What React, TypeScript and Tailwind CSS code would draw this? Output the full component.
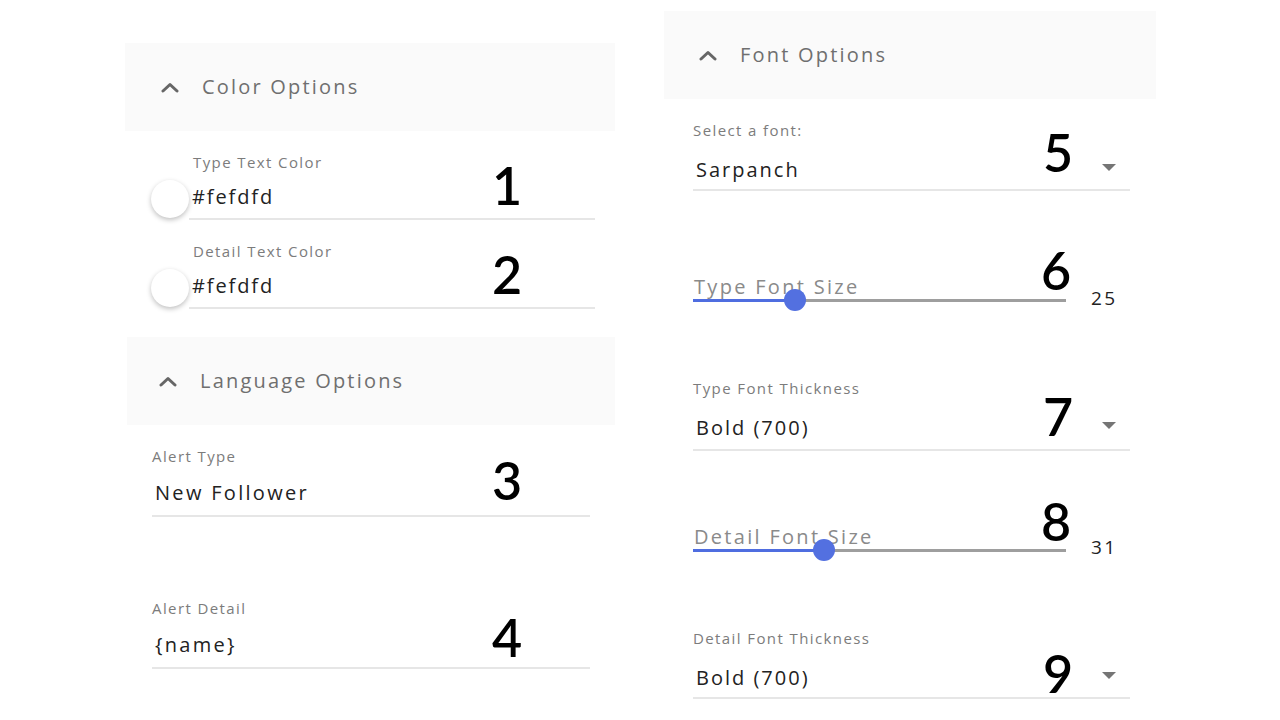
import React from "react";

const Chevron = () => (
  <svg width="18" height="11" viewBox="0 0 18 11" fill="none">
    <polyline points="2,9 9,2.5 16,9" stroke="#666" strokeWidth="3" strokeLinecap="round" strokeLinejoin="round" />
  </svg>
);

const Caret = () => (
  <svg width="14" height="7" viewBox="0 0 14 7">
    <polygon points="0,0 14,0 7,7" fill="#757575" />
  </svg>
);

const Num = ({ n, className }: { n: string; className: string }) => (
  <span
    className={`absolute w-[40px] text-center text-[52px] leading-[52px] font-semibold text-black font-['Lato',sans-serif] tracking-normal ${className}`}
  >
    {n}
  </span>
);

const Header = ({ title, className }: { title: string; className: string }) => (
  <div className={`h-[88px] bg-[#fafafa] flex items-center gap-[23px] ${className}`}>
    <Chevron />
    <span className="text-[20px] text-[#6f6f6f] tracking-[2.2px]">{title}</span>
  </div>
);

const ColorField = ({ label, value, n, className }: { label: string; value: string; n: string; className: string }) => (
  <div className={`flex items-end ${className}`}>
    <div className="ml-[26px] mb-[2px] w-[38px] h-[38px] rounded-full bg-white shadow-[0_2px_5px_rgba(0,0,0,0.25)] shrink-0" />
    <div className="relative w-[406px] border-b-2 border-[#e6e6e6] pb-[7px]">
      <div className="pl-[4px] text-[15px] leading-[20px] text-[#7c7c7c] tracking-[1.4px]">{label}</div>
      <div className="pl-[3px] mt-[11px] text-[20px] leading-[28px] text-[#222] tracking-[1.9px]">{value}</div>
      <Num n={n} className="left-[298px] top-[7px]" />
    </div>
  </div>
);

const TextField = ({ label, value, n, className, numTop }: { label: string; value: string; n: string; className: string; numTop: string }) => (
  <div className={`relative ml-[27px] w-[438px] border-b-2 border-[#e6e6e6] pb-[8px] ${className}`}>
    <div className="text-[15px] leading-[20px] text-[#7c7c7c] tracking-[1.4px]">{label}</div>
    <div className="pl-[3px] mt-[13px] text-[20px] leading-[28px] text-[#222] tracking-[2.3px]">{value}</div>
    <Num n={n} className={`left-[335px] ${numTop}`} />
  </div>
);

const SelectField = ({ label, value, n, className, pb, numTop }: { label: string; value: string; n: string; className: string; pb: string; numTop: string }) => (
  <div className={`relative ml-[29px] w-[437px] border-b-2 border-[#e6e6e6] ${pb} ${className}`}>
    <div className="text-[15px] leading-[20px] text-[#7c7c7c] tracking-[1.4px]">{label}</div>
    <div className="mt-[16px] flex items-center justify-between">
      <span className="pl-[3px] text-[20px] leading-[28px] text-[#222] tracking-[2px]">{value}</span>
      <span className="mr-[14px] mb-[6px] flex">
        <Caret />
      </span>
    </div>
    <Num n={n} className={`left-[345px] ${numTop}`} />
  </div>
);

const Slider = ({ label, value, n, active, className, numMt, numTop }: { label: string; value: string; n: string; active: string; className: string; numMt: string; numTop: string }) => (
  <div className={`ml-[29px] flex items-start ${className}`}>
    <div className="relative w-[373px]">
      <div className="pl-[1px] text-[20px] leading-[24px] text-[#8a8a8a] tracking-[2.3px]">{label}</div>
      <div className="relative h-[3px] bg-[#9e9e9e]">
        <div className={`h-[3px] bg-[#4f6de0] ${active === "25" ? "w-[102px]" : "w-[131px]"}`} />
        <div
          className={`absolute top-[-10px] w-[22px] h-[22px] rounded-full bg-[#5370e0] ${active === "25" ? "left-[91px]" : "left-[120px]"}`}
        />
      </div>
      <Num n={n} className={`left-[343px] ${numTop}`} />
    </div>
    <span className={`ml-[25px] text-[19px] leading-[20px] text-[#222] tracking-[2.4px] ${numMt}`}>{value}</span>
  </div>
);

export default function App() {
  return (
    <div className="w-[1280px] h-[720px] bg-white overflow-hidden flex font-['Open_Sans',sans-serif]">
      <div className="ml-[125px] w-[490px] pt-[43px] flex flex-col">
        <Header title="Color Options" className="pl-[36px]" />
        <ColorField label="Type Text Color" value="#fefdfd" n="1" className="mt-[21px]" />
        <ColorField label="Detail Text Color" value="#fefdfd" n="2" className="mt-[21px]" />
        <Header title="Language Options" className="mt-[28px] ml-[2px] pl-[32px] gap-[22px]" />
        <TextField label="Alert Type" value="New Follower" n="3" className="mt-[21px]" numTop="top-[8px]" />
        <TextField label="Alert Detail" value="{name}" n="4" className="mt-[81px]" numTop="top-[13px]" />
      </div>
      <div className="ml-[49px] w-[492px] pt-[11px] flex flex-col">
        <Header title="Font Options" className="pl-[35px]" />
        <SelectField label="Select a font:" value="Sarpanch" n="5" className="mt-[21px]" pb="pb-[5px]" numTop="top-[6px]" />
        <Slider label="Type Font Size" value="25" n="6" active="25" className="mt-[84px]" numMt="mt-[13px]" numTop="top-[-31px]" />
        <SelectField label="Type Font Thickness" value="Bold (700)" n="7" className="mt-[70px]" pb="pb-[7px]" numTop="top-[12px]" />
        <Slider label="Detail Font Size" value="31" n="8" active="31" className="mt-[74px]" numMt="mt-[12px]" numTop="top-[-30px]" />
        <SelectField label="Detail Font Thickness" value="Bold (700)" n="9" className="mt-[71px]" pb="pb-[5px]" numTop="top-[19px]" />
      </div>
    </div>
  );
}
